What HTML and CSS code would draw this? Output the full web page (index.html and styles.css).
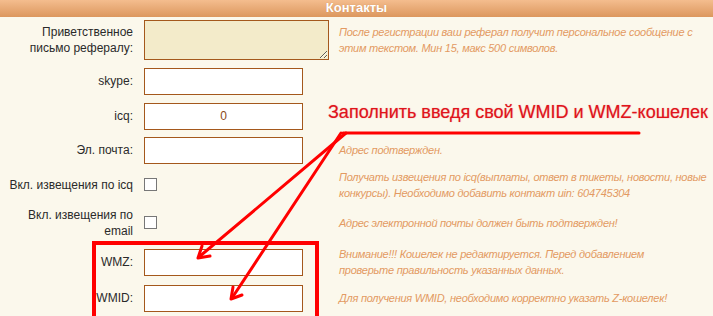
FILE: index.html
```html
<!DOCTYPE html>
<html lang="ru">
<head>
<meta charset="utf-8">
<title>Контакты</title>
<link rel="stylesheet" href="styles.css">
</head>
<body>
<div class="page">
  <div class="header">Контакты</div>
  <div class="form">
    <div class="label">Приветственное<br>письмо рефералу:</div>
    <div class="field"><textarea class="textarea"></textarea></div>
    <div class="desc">После регистрации ваш реферал получит персональное сообщение с<br>этим текстом. Мин 15, макс 500 символов.</div>

    <div class="label">skype:</div>
    <div class="field"><input class="input" type="text"></div>
    <div class="desc"></div>

    <div class="label">icq:</div>
    <div class="field"><input class="input center" type="text" value="0"></div>
    <div class="desc"></div>

    <div class="label">Эл. почта:</div>
    <div class="field"><input class="input" type="text"></div>
    <div class="desc">Адрес подтвержден.</div>

    <div class="label">Вкл. извещения по icq</div>
    <div class="field"><input class="check" type="checkbox"></div>
    <div class="desc">Получать извещения по icq(выплаты, ответ в тикеты, новости, новые<br>конкурсы). Необходимо добавить контакт uin: 604745304</div>

    <div class="label">Вкл. извещения по<br>email</div>
    <div class="field"><input class="check" type="checkbox"></div>
    <div class="desc">Адрес электронной почты должен быть подтвержден!</div>

    <div class="label">WMZ:</div>
    <div class="field"><input class="input" type="text"></div>
    <div class="desc">Внимание!!! Кошелек не редактируется. Перед добавлением<br>проверьте правильность указанных данных.</div>

    <div class="label">WMID:</div>
    <div class="field"><input class="input" type="text"></div>
    <div class="desc">Для получения WMID, необходимо корректно указать Z-кошелек!</div>
  </div>

  <div class="note">Заполнить введя свой WMID и WMZ-кошелек</div>
  <div class="frame"></div>
  <svg class="arrows" width="713" height="316" viewBox="0 0 713 316">
    <g stroke="#ff0000" stroke-width="3" fill="none" stroke-linecap="round" stroke-linejoin="round">
      <line x1="343" y1="133" x2="639" y2="133"/>
      <line x1="346" y1="133" x2="199" y2="257"/>
      <polyline points="202,246 198,258 210,256"/>
      <line x1="341" y1="133" x2="232" y2="298"/>
      <polyline points="233,287 231,299 242,295"/>
    </g>
  </svg>
</div>
</body>
</html>
```

FILE: styles.css
```css
html, body {
  margin: 0;
  padding: 0;
  background: #fbf8ec;
}

.page {
  position: relative;
  width: 713px;
  height: 316px;
  overflow: hidden;
  font-family: "Liberation Sans", Arial, sans-serif;
  font-size: 12px;
  color: #2a2a2a;
}

.header {
  height: 17px;
  line-height: 16px;
  background: linear-gradient(#f4bd8e, #dc975e);
  color: #ffffff;
  font-weight: bold;
  font-size: 13px;
  text-align: center;
  text-shadow: 0 0 1px #c98a55;
}

.form {
  display: grid;
  grid-template-columns: 134px 185px 1fr;
  grid-template-rows: 46px 36px 34px 34px 35px 41px 38px 34px;
  column-gap: 10px;
  align-items: center;
}

.label {
  text-align: right;
  white-space: nowrap;
  line-height: 16px;
  padding-right: 1px;
}

.field {
  display: flex;
  align-items: center;
}

.textarea {
  box-sizing: border-box;
  width: 185px;
  height: 40px;
  margin: 0;
  border: 1px solid #a4581c;
  background: #f3ebca;
  resize: both;
}

.input {
  box-sizing: border-box;
  width: 159px;
  height: 27px;
  margin: 0;
  padding: 0 4px;
  border: 1px solid #a4581c;
  background: #ffffff;
  font-family: "Liberation Sans", Arial, sans-serif;
  font-size: 12px;
  color: #8a4a18;
}

.input.center {
  text-align: center;
}

.check {
  appearance: none;
  -webkit-appearance: none;
  box-sizing: border-box;
  width: 13px;
  height: 13px;
  margin: 0;
  border: 1px solid #777777;
  background: #ffffff;
}

.desc {
  font-style: italic;
  font-size: 11px;
  line-height: 16px;
  letter-spacing: -0.25px;
  color: #e39a62;
  white-space: nowrap;
}

.note {
  position: absolute;
  left: 328px;
  top: 100px;
  font-size: 18px;
  line-height: 24px;
  color: #e0141c;
  white-space: nowrap;
  text-shadow: 0 0 1px rgba(224, 20, 28, 0.5);
}

.frame {
  position: absolute;
  left: 92px;
  top: 241px;
  width: 219px;
  height: 90px;
  border: 4px solid #ff0000;
}

.arrows {
  position: absolute;
  left: 0;
  top: 0;
}
```
